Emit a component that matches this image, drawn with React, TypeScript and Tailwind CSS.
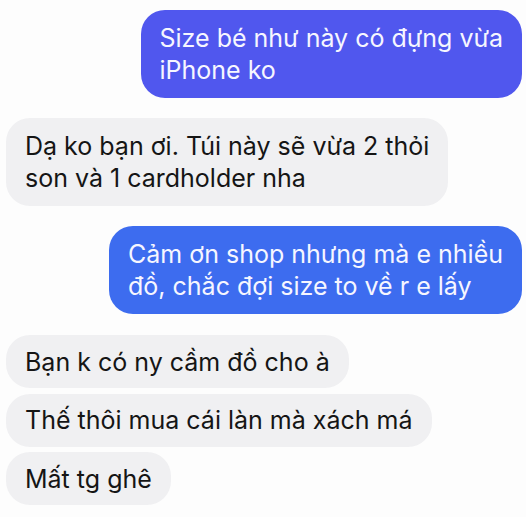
const font = { fontFamily: "Inter, 'Noto Sans', sans-serif" };

function Sent({ lines, color }: { lines: string[]; color: string }) {
  return (
    <div className="flex justify-end">
      <div
        className={`rounded-[24px] px-[19px] py-3 text-[25px] leading-[32px] text-[#f6f6ff] ${color}`}
      >
        {lines.map((l) => (
          <div key={l} className="whitespace-nowrap">
            {l}
          </div>
        ))}
      </div>
    </div>
  );
}

function Received({ lines }: { lines: string[] }) {
  const single = lines.length === 1;
  return (
    <div className="flex justify-start">
      <div
        className={`rounded-[24px] bg-[#f0f0f2] px-[19px] text-[25px] leading-[32px] text-[#151515] ${
          single ? "py-[10.5px]" : "py-3"
        }`}
      >
        {lines.map((l) => (
          <div key={l} className="whitespace-nowrap">
            {l}
          </div>
        ))}
      </div>
    </div>
  );
}

export default function App() {
  return (
    <div className="min-h-[517px] w-[526px] overflow-hidden bg-[#fdfdfd]" style={font}>
      <div className="flex flex-col pl-[6px] pr-[4px] pt-[10px]">
        <Sent lines={["Size bé như này có đựng vừa", "iPhone ko"]} color="bg-[#5057ee]" />

        <div className="mt-5">
          <Received lines={["Dạ ko bạn ơi. Túi này sẽ vừa 2 thỏi", "son và 1 cardholder nha"]} />
        </div>

        <div className="mt-5">
          <Sent
            lines={["Cảm ơn shop nhưng mà e nhiều", "đồ, chắc đợi size to về r e lấy"]}
            color="bg-[#3d6cef]"
          />
        </div>

        <div className="mt-[21px] flex flex-col gap-[5.5px]">
          <Received lines={["Bạn k có ny cầm đồ cho à"]} />
          <Received lines={["Thế thôi mua cái làn mà xách má"]} />
          <Received lines={["Mất tg ghê"]} />
        </div>
      </div>
    </div>
  );
}
